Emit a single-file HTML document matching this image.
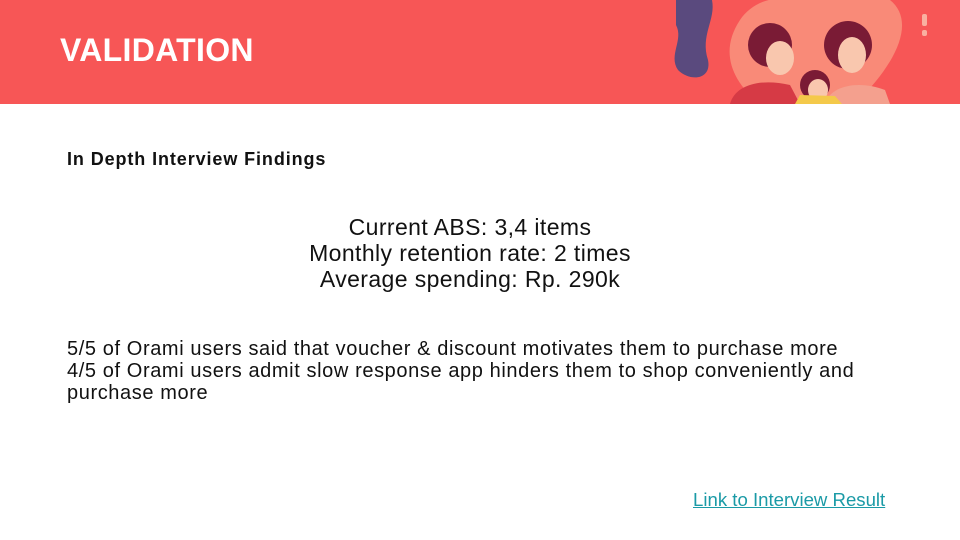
<!DOCTYPE html>
<html><head><meta charset="utf-8"><style>
body{margin:0;width:960px;height:540px;overflow:hidden;background:#fff;font-family:"Liberation Sans",sans-serif;position:relative}
.hdr{position:absolute;left:0;top:0;width:960px;height:104px;background:#f75656;overflow:hidden}
.t{position:absolute;left:60px;top:32px;color:#fff;font-weight:bold;font-size:32px;letter-spacing:0.3px}
.s{position:absolute;left:67px;top:149px;font-weight:bold;font-size:18px;color:#111;letter-spacing:0.9px}
.c{position:absolute;left:0;width:940px;text-align:center;font-size:23px;color:#111;line-height:26px;top:214px;letter-spacing:0.4px}
.b{position:absolute;left:67px;top:338px;font-size:20px;line-height:22px;color:#111;white-space:nowrap;letter-spacing:0.6px}
.l{position:absolute;left:693px;top:489px;font-size:18.6px;color:#1a9aa6;text-decoration:underline}
</style></head><body>
<div class="hdr">
<svg width="960" height="104" style="position:absolute;left:0;top:0">
<path d="M676 0 L712 0 C716 20 700 35 708 60 C712 80 690 82 678 70 C668 55 684 40 676 25 Z" fill="#5a4a7e"/>
<path d="M855 104 C900 60 915 20 890 0 L790 0 C770 -5 750 5 740 20 C720 50 730 80 760 104 Z" fill="#f98a78"/>
<circle cx="770" cy="45" r="22" fill="#7a1b35"/>
<ellipse cx="780" cy="58" rx="14" ry="17" fill="#f9c7ae"/>
<path d="M730 104 C735 85 760 78 790 85 L800 104 Z" fill="#d63a45"/>
<circle cx="848" cy="45" r="24" fill="#7a1b35"/>
<ellipse cx="852" cy="55" rx="14" ry="18" fill="#f9c7ae"/>
<path d="M825 104 C830 85 860 80 885 90 L890 104 Z" fill="#f4a08e"/>
<circle cx="815" cy="85" r="15" fill="#7a1b35"/>
<ellipse cx="818" cy="90" rx="10" ry="11" fill="#f9c7ae"/>
<path d="M795 104 L800 95 L835 96 L842 104 Z" fill="#f4c94a"/>
<rect x="922" y="14" width="5" height="12" rx="2" fill="#f9b0a0"/>
<rect x="922" y="30" width="5" height="6" rx="2" fill="#f9b0a0"/>
</svg>
<div class="t">VALIDATION</div>
</div>
<div class="s">In Depth Interview Findings</div>
<div class="c">Current ABS: 3,4 items<br>Monthly retention rate: 2 times<br>Average spending: Rp. 290k</div>
<div class="b">5/5 of Orami users said that voucher &amp; discount motivates them to purchase more<br>4/5 of Orami users admit slow response app hinders them to shop conveniently and<br>purchase more</div>
<div class="l">Link to Interview Result</div>
</body></html>
